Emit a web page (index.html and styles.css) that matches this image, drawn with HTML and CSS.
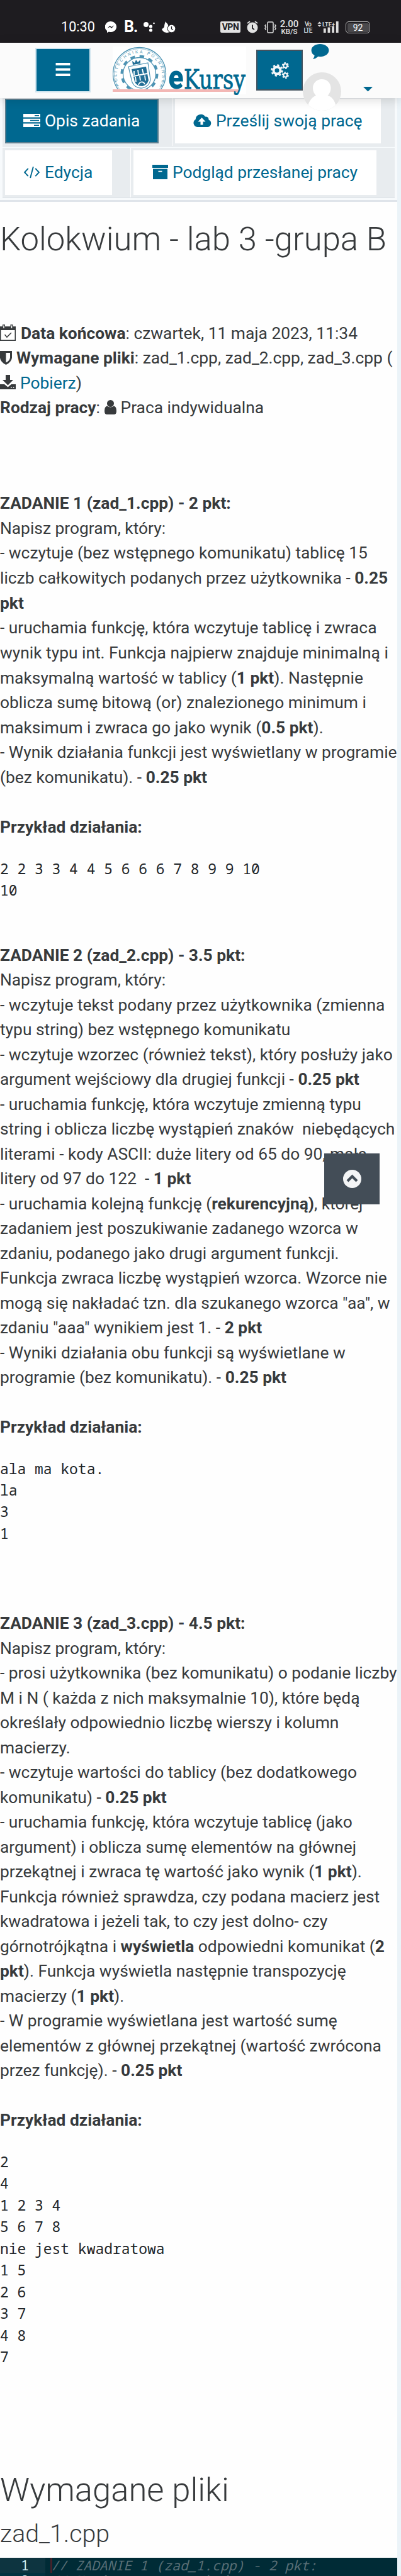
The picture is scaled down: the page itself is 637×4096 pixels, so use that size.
FILE: index.html
```html
<!DOCTYPE html>
<html lang="pl">
<head>
<meta charset="utf-8">
<title>Kolokwium - lab 3 - eKursy</title>
<link rel="stylesheet" href="styles.css">
</head>
<body>
<div class="status">
  <span class="clock">10:30</span>
  <svg class="st-msg" viewBox="0 0 18 18"><path fill="#fff" d="M9 0a9 8.5 0 0 0-6 15v3l3-1.500A9 8.500 0 1 0 9 0z"/><path d="M3.500 11l4-4.300 2.500 2.200 4.300-2.600-4 4.600-2.600-2.200z" fill="#1e1c20"/></svg>
  <span class="st-b">B.</span>
  <svg class="st-dots" viewBox="0 0 18 18" fill="#fff"><circle cx="4" cy="5" r="4"/><circle cx="11.500" cy="8" r="2.600"/><circle cx="11.500" cy="14" r="2.600"/><circle cx="16.500" cy="3" r="1.300"/></svg>
  <svg class="st-flame" viewBox="0 0 22 18"><path fill="#fff" d="M6 0c1 3 5 4 4 8l-1 4 3 5c-4 2-10 1-12-5 2-1 3-1 4-4C4 5 5 3 6 0z"/><circle cx="15.500" cy="11.500" r="6.300" fill="#fff" stroke="#1e1c20"/><path d="M15.500 8v4l2.500 1.500" fill="none" stroke="#1e1c20" stroke-width="1.300"/></svg>
  <span class="vpn">VPN</span>
  <svg class="st-alarm" viewBox="0 0 18 20"><circle cx="9" cy="11" r="8.500" fill="#e2e2e2"/><path d="M1 4l4-3M17 4l-4-3" stroke="#e2e2e2" stroke-width="1.800"/><path d="M9 6.500V12l3 2" fill="none" stroke="#1e1c20" stroke-width="1.800"/></svg>
  <svg class="st-vib" viewBox="0 0 19 19" fill="none" stroke="#e2e2e2" stroke-width="1.500"><rect x="5" y="1" width="9" height="17" rx="1.500"/><path d="M2.500 5l-1.500 2 1.500 2-1.500 2 1.500 3M16.500 5l1.500 2-1.500 2 1.500 2-1.500 3"/></svg>
  <span class="speed"><b>2.00</b><i>KB/S</i></span>
  <span class="volte"><b>Vo</b><b>LTE</b></span>
  <svg class="st-signal" viewBox="0 0 36 20"><path d="M0 5l3.300-3.500L6.500 5zM0 7h6.500L3.300 10z" fill="#ddd"/><text x="8" y="9" class="lte" textLength="21" lengthAdjust="spacingAndGlyphs">LTE+</text><path fill="#ddd" d="M10 13h4v7h-4zM17 11h4v9h-4zM24 9h4v11h-4zM31 1h4v19h-4z"/></svg>
  <span class="battery"><b>92</b></span>
</div>

<header class="top">
  <span class="btn-menu"><svg viewBox="0 0 24 22"><path fill="#fff" d="M0 0h24v4.200H0zM0 8.900h24v4.200H0zM0 17.800h24V22H0z"/></svg></span>
  <svg class="logo" viewBox="0 0 212 76">
    <defs><clipPath id="seal"><path d="M0 0h90v67.500H0z"/></clipPath><path id="ring" d="M10 62A36 36 0 1 1 75 62"/></defs>
    <path fill="#fff" d="M0 0h212v76H0z"/>
    <g clip-path="url(#seal)" fill="none" stroke="#4d93b3">
      <circle cx="42.500" cy="43.500" r="42" stroke-width="1.300"/>
      <circle cx="42.500" cy="43.500" r="40" stroke-width=".6"/>
      <circle cx="42.500" cy="43.500" r="28" stroke-width="4" stroke-dasharray="7.300 7.360"/>
      <circle cx="42.500" cy="43.500" r="26" stroke-width="1.300" fill="#fff"/>
      <path d="M25 32l31-6 4 27q-2 11-13 13-11 1-16-9z" stroke-width="1.200"/>
      <path d="M30 36l23-4 4 22q-3 8-10 9-9 0-12-7z" fill="#236f96" stroke="none"/>
      <path d="M34 39v6M40 37l1 8M47 36l2 8M36 48l1 8M43 47l1 7M51 46l1 8M33 47l22-4M41 61c2-6 8-6 10-1" stroke="#fff" stroke-width="1.800"/>
      <path d="M32 29l-1-6 4 3 2-5 3 4 4-4v6z" fill="#236f96" stroke="none"/>
    </g>
    <text class="ringtext"><textPath href="#ring" textLength="146">POLITECHNIKA POZNAŃSKA</textPath></text>
    <path fill="#f3b7b5" d="M0 68h199v4H0z"/>
    <text class="logo-e" x="88.500" y="66.500" textLength="24" lengthAdjust="spacingAndGlyphs">e</text>
    <text class="logo-k" x="113" y="66.500" textLength="98" lengthAdjust="spacingAndGlyphs">Kursy</text>
  </svg>
  <span class="btn-gear"><svg viewBox="0 0 29 26" fill="none" stroke="#f4f7f9"><circle cx="10" cy="13" r="5.500" stroke-width="4"/><circle cx="10" cy="13" r="8.500" stroke-width="2.500" stroke-dasharray="3.340 3.340"/><circle cx="23.300" cy="5.500" r="3" stroke-width="2.200"/><circle cx="23.300" cy="5.500" r="4.700" stroke-width="1.700" stroke-dasharray="2.460 2.460"/><circle cx="23.300" cy="20.500" r="3" stroke-width="2.200"/><circle cx="23.300" cy="20.500" r="4.700" stroke-width="1.700" stroke-dasharray="2.460 2.460"/></svg></span>
  <span class="user">
    <svg class="bubble" viewBox="0 0 29 25"><path fill="#006890" d="M14.500 0C22 0 29 4 29 10.500S22 21 14.500 21q-1.500 0-3-.3Q7.500 24.500 2.500 25q2.500-2.500 2.800-6Q0 16 0 10.500C0 4 7 0 14.500 0z"/></svg>
    <svg class="avatar" viewBox="0 0 61 61"><defs><clipPath id="av"><circle cx="30.500" cy="30.500" r="30.500"/></clipPath></defs><g clip-path="url(#av)"><path fill="#e4e4e4" d="M0 0h61v61H0z"/><path fill="#fff" d="M30.500 11c8 0 14 6 14 14 0 5-2 9-5 12 6 1 12 8 13 17v8H8v-8c2-9 7-15 13-17-3-3-5-7-5-12 0-8 6-14 14.500-14z"/></g></svg>
  </span>
  <span class="caret"></span>
</header>

<main class="page">
  <nav class="tabs">
    <div class="row">
      <div class="cell c1"><a class="tab active"><svg class="i-list" viewBox="0 0 27 27" preserveAspectRatio="none"><path fill="#fff" d="M0 0h27v7H0zM0 10h27v7H0zM0 20h27v7H0z"/><path stroke="#006890" stroke-width="1.800" d="M18 3.500h7M11 13.500h14M17 23.500h8"/></svg>Opis zadania</a></div>
      <div class="cell"><a class="tab t2"><svg class="i-cloud" viewBox="0 0 29 21"><path fill="#006890" d="M6.500 21A6.500 6.500 0 0 1 3.600 9 8.500 8.500 0 0 1 19 4.500a4.600 4.600 0 0 1 5.500 5A6 6 0 0 1 23 21z"/><path fill="#fff" d="M13.500 6l6 6.500h-4V17.500h-4v-5h-4z"/></svg>Prześlij swoją pracę</a></div>
    </div>
    <div class="row">
      <div class="cell c3"><a class="tab t3"><svg class="i-code" viewBox="0 0 27 21" fill="none" stroke="#006890" stroke-width="2"><path d="M7.500 4L1.500 10.500l6 6.500M19.500 4l6 6.500-6 6.500M16 1l-5 19"/></svg>Edycja</a></div>
      <div class="cell"><a class="tab t4"><svg class="i-box" viewBox="0 0 25 23"><path fill="#006890" d="M0 0h25v5H0zM1 6.500h23V23H1z"/><path stroke="#fff" stroke-width="1.600" d="M9.500 10.500h6"/></svg>Podgląd przesłanej pracy</a></div>
    </div>
  </nav>

  <h1 class="title">Kolokwium - lab 3 -grupa B</h1>

  <p class="meta"><svg class="i-cal" viewBox="0 0 25 26"><path fill="#373a3c" fill-rule="evenodd" d="M0 3h25v23H0zM1.500 9v15.500h22V9z"/><path stroke="#373a3c" stroke-width="4" d="M6 0v7M18.500 0v7"/><path stroke="#fff" stroke-width="1.500" d="M6 1.500v4.500M18.500 1.500v4.500"/><path d="M7.500 16l3.500 4 7-7" fill="none" stroke="#373a3c" stroke-width="1.600"/></svg><b>Data końcowa</b>: czwartek, 11 maja 2023, 11:34<br>
  <svg class="i-shield" viewBox="0 0 19 22"><path fill="#373a3c" fill-rule="evenodd" d="M0 0h19v11q-1 7-9.500 11Q1 18 0 11zM9.500 3v15.500q6-3 6.500-8V3z"/></svg><b>Wymagane pliki</b>: zad_1.cpp, zad_2.cpp, zad_3.cpp (<br>
  <svg class="i-down" viewBox="0 0 25 23"><path fill="#373a3c" d="M9 0h7v8h5l-8.500 8.500L4 8h5zM0 15h7l5.500 4.500L18 15h7v8H0z"/><path stroke="#fff" stroke-width="1.500" d="M17 20h1.700M20.700 20h1.700"/></svg><a class="link">Pobierz</a>)<br>
  <b>Rodzaj pracy</b>: <svg class="i-user" viewBox="0 0 19 23"><circle cx="9.500" cy="5.500" r="5.500" fill="#373a3c"/><path fill="#373a3c" d="M4 9.500q5.500 4 11 0 4 1 4 8 0 5.500-4 5.500H4q-4 0-4-5.500 0-7 4-8z"/></svg>Praca indywidualna</p>

  <section class="task t-one">
    <p class="text"><b>ZADANIE 1 (zad_1.cpp) - 2 pkt:</b><br>
Napisz program, który:<br>
- wczytuje (bez wstępnego komunikatu) tablicę 15<br>
liczb całkowitych podanych przez użytkownika - <b>0.25<br>
pkt</b><br>
- uruchamia funkcję, która wczytuje tablicę i zwraca<br>
wynik typu int. Funkcja najpierw znajduje minimalną i<br>
maksymalną wartość w tablicy (<b>1 pkt</b>). Następnie<br>
oblicza sumę bitową (or) znalezionego minimum i<br>
maksimum i zwraca go jako wynik (<b>0.5 pkt</b>).<br>
- Wynik działania funkcji jest wyświetlany w programie<br>
(bez komunikatu). - <b>0.25 pkt</b><br>
<br>
<b>Przykład działania:</b></p>
    <pre class="sample">2 2 3 3 4 4 5 6 6 6 7 8 9 9 10
10</pre>
  </section>

  <section class="task t-two">
    <p class="text"><b>ZADANIE 2 (zad_2.cpp) - 3.5 pkt:</b><br>
Napisz program, który:<br>
- wczytuje tekst podany przez użytkownika (zmienna<br>
typu string) bez wstępnego komunikatu<br>
- wczytuje wzorzec (również tekst), który posłuży jako<br>
argument wejściowy dla drugiej funkcji - <b>0.25 pkt</b><br>
- uruchamia funkcję, która wczytuje zmienną typu<br>
string i oblicza liczbę wystąpień znaków&nbsp; niebędących<br>
literami - kody ASCII: duże litery od 65 do 90, małe<br>
litery od 97 do 122&nbsp; - <b>1 pkt</b><br>
- uruchamia kolejną funkcję (<b>rekurencyjną)</b>, której<br>
zadaniem jest poszukiwanie zadanego wzorca w<br>
zdaniu, podanego jako drugi argument funkcji.<br>
Funkcja zwraca liczbę wystąpień wzorca. Wzorce nie<br>
mogą się nakładać tzn. dla szukanego wzorca "aa", w<br>
zdaniu "aaa" wynikiem jest 1. - <b>2 pkt</b><br>
- Wyniki działania obu funkcji są wyświetlane w<br>
programie (bez komunikatu). - <b>0.25 pkt</b><br>
<br>
<b>Przykład działania:</b></p>
    <pre class="sample">ala ma kota.
la
3
1</pre>
    <span class="to-top"><svg viewBox="0 0 29 29"><circle cx="14.500" cy="14.500" r="14.500" fill="#f4f5f6"/><path d="M7 18l7.500-7.500L22 18" fill="none" stroke="#434d57" stroke-width="4.200"/></svg></span>
  </section>

  <section class="task t-three">
    <p class="text"><b>ZADANIE 3 (zad_3.cpp) - 4.5 pkt:</b><br>
Napisz program, który:<br>
- prosi użytkownika (bez komunikatu) o podanie liczby<br>
M i N ( każda z nich maksymalnie 10), które będą<br>
określały odpowiednio liczbę wierszy i kolumn<br>
macierzy.<br>
- wczytuje wartości do tablicy (bez dodatkowego<br>
komunikatu) - <b>0.25 pkt</b><br>
- uruchamia funkcję, która wczytuje tablicę (jako<br>
argument) i oblicza sumę elementów na głównej<br>
przekątnej i zwraca tę wartość jako wynik (<b>1 pkt</b>).<br>
Funkcja również sprawdza, czy podana macierz jest<br>
kwadratowa i jeżeli tak, to czy jest dolno- czy<br>
górnotrójkątna i <b>wyświetla</b> odpowiedni komunikat (<b>2<br>
pkt</b>). Funkcja wyświetla następnie transpozycję<br>
macierzy (<b>1 pkt</b>).<br>
- W programie wyświetlana jest wartość sumę<br>
elementów z głównej przekątnej (wartość zwrócona<br>
przez funkcję). - <b>0.25 pkt</b><br>
<br>
<b>Przykład działania:</b></p>
    <pre class="sample">2
4
1 2 3 4
5 6 7 8
nie jest kwadratowa
1 5
2 6
3 7
4 8
7</pre>
  </section>

  <h2 class="files">Wymagane pliki</h2>
  <h3 class="file">zad_1.cpp</h3>
  <div class="code">
    <div class="line current"><span class="num">1</span><span class="src">// ZADANIE 1 (zad_1.cpp) - 2 pkt:</span></div>
    <div class="line"><span class="num">2</span><span class="src">// Napisz program, który:</span></div>
  </div>
</main>
</body>
</html>
```
FILE: styles.css
```css
* { box-sizing: border-box; margin: 0; padding: 0; }
body { width: 637px; height: 4096px; overflow: hidden; background: #fff; font-family: Roboto, sans-serif; font-size: 26.350px; color: #373a3c; }
svg { flex: none; }

/* phone status bar */
.status { display: flex; align-items: flex-start; height: 68px; padding: 34px 0 0 97px; background: #1e1c20; color: #fff; }
.clock { width: 70px; font-size: 21.600px; line-height: 18px; }
.st-msg { width: 18px; height: 18px; }
.st-b { width: 31px; margin-left: 12px; font-size: 25px; font-weight: 700; line-height: 18px; white-space: nowrap; letter-spacing: -1px; }
.st-dots { width: 18px; height: 18px; }
.st-flame { width: 22px; height: 18px; margin-left: 11px; }
.vpn { width: 32px; height: 18px; margin-left: 71px; border-radius: 2px; background: #e2e2e2; color: #1e1c20; font-size: 14px; font-weight: 700; line-height: 18px; text-align: center; letter-spacing: -.5px; }
.st-alarm { width: 18px; height: 20px; margin: -1px 0 0 9.500px; }
.st-vib { width: 19px; height: 19px; margin-left: 10.500px; }
.speed { display: flex; flex-direction: column; align-items: center; width: 31px; margin: -2px 0 0 5px; color: #e2e2e2; }
.speed b { font-size: 15px; font-weight: 500; line-height: 13px; }
.speed i { font-style: normal; font-size: 11.500px; font-weight: 500; line-height: 11px; }
.volte { display: flex; flex-direction: column; align-items: center; width: 14px; margin-left: 7px; color: #ddd; }
.volte b { font-size: 10px; font-weight: 500; line-height: 9.500px; letter-spacing: -1px; }
.st-signal { width: 35px; height: 19px; margin: -1px 0 0 8px; }
.lte { font: 700 10px Roboto, sans-serif; fill: #ddd; }
.battery { width: 39px; height: 19px; margin-left: 10px; border: 1.500px solid #bdbdbd; border-radius: 5px; padding: 1.500px; }
.battery b { display: block; background: #4a494c; border-radius: 2px; font-size: 14px; font-weight: 400; line-height: 14px; text-align: center; }

/* sticky page header */
.top { position: relative; z-index: 2; display: flex; align-items: flex-start; height: 88px; padding-left: 56px; background: #fbfbfb; box-shadow: 0 2px 16px rgba(0, 0, 0, .16); }
.btn-menu { display: flex; align-items: center; justify-content: center; width: 88px; height: 71px; margin-top: 8px; background: #006890; border: 2px solid #cfe4ee; }
.btn-menu svg { width: 24px; height: 21px; margin-bottom: 2px; }
.logo { width: 212px; height: 76px; margin: 6px 0 0 35px; overflow: visible; }
.ringtext { font: 6.500px "Liberation Sans", sans-serif; fill: #4d93b3; }
.logo-e { font: 900 53px Roboto, sans-serif; fill: #006890; }
.logo-k { font: 42px "DejaVu Serif", serif; fill: #006890; stroke: #006890; stroke-width: .8px; }
.btn-gear { display: flex; align-items: center; justify-content: center; width: 74px; height: 65px; margin: 11px 0 0 16px; background: #006890; border: 2px solid #44525e; }
.btn-gear svg { width: 29px; height: 26px; }
.user { display: flex; flex-direction: column; width: 61px; padding-top: 2px; }
.bubble { width: 29px; height: 24px; margin-left: 13px; }
.avatar { width: 61px; height: 61px; margin-top: 21px; }
.caret { width: 15px; height: 7.500px; margin: 70px 0 0 35px; background: #006890; clip-path: polygon(0 0, 100% 0, 50% 100%); }

/* page */
.page { width: 637px; height: 3940px; border-right: 6px solid #ebf3f8; background: #fefefe; }
.tabs { height: 165px; padding: 0 4px; background: #f7fafc; border-bottom: 3px solid #dfe4ea; }
.row { display: flex; height: 77px; margin-bottom: 2px; background: #e8ecef; border-bottom: 1px solid #dde2e7; }
.row + .row { height: 80px; }
.cell { padding: 1px 0 0 4px; }
.row + .row .cell { padding-top: 4px; }
.c1 { width: 270px; border-right: 1px solid #fff; }
.c3 { width: 204px; border-right: 1px solid #fff; }
.tab { display: flex; align-items: center; height: 71px; padding: 0 0 2px 29px; background: #fff; color: #006890; white-space: nowrap; }
.active { width: 244px; background: #006890; color: #fff; border: 2px solid #5c7f90; padding-left: 27px; }
.t2 { width: 327px; }
.t3 { width: 170px; }
.t4 { width: 386px; padding-left: 30px; }
.i-list { width: 27px; height: 21px; margin-right: 7px; }
.i-cloud { width: 29px; height: 21px; margin-right: 7px; }
.i-code { width: 27px; height: 20px; margin-right: 7px; }
.i-box { width: 25px; height: 23px; margin-right: 7px; }

.title { margin-top: 28px; font-size: 52.600px; font-weight: 300; line-height: 63px; white-space: nowrap; }
.meta { margin-top: 99px; line-height: 39.430px; white-space: nowrap; }
.meta svg { margin-right: 7px; }
.meta .i-cal { width: 25px; height: 26px; vertical-align: -3px; margin-right: 8px; }
.i-shield { width: 19px; height: 22px; vertical-align: -2px; }
.i-down { width: 25px; height: 23px; vertical-align: -1px; }
.i-user { width: 19px; height: 23px; vertical-align: -2px; }
.link { color: #006890; }

.task { position: relative; white-space: nowrap; }
.t-one { margin-top: 112.300px; }
.t-two { margin-top: 67.400px; }
.t-three { margin-top: 107.500px; }
.text { line-height: 39.480px; }
.t-one .text { line-height: 39.640px; }
.sample { margin-top: 28px; font: 22.940px/34.300px "Noto Sans Mono", "DejaVu Sans Mono", monospace; color: #212529; }
.t-three .sample { line-height: 34.520px; }
.to-top { position: absolute; left: 515px; top: 334px; display: flex; align-items: center; justify-content: center; width: 88px; height: 81px; background: #434d57; }
.to-top svg { width: 29px; height: 29px; }

.files { margin-top: 163px; font-size: 52.600px; font-weight: 300; line-height: 63px; }
.file { margin-top: 15px; font-size: 39.300px; font-weight: 300; line-height: 47px; }
.code { height: 32px; margin-top: 14px; overflow: hidden; background: #002b36; font: 21.350px/24px "Noto Sans Mono", "DejaVu Sans Mono", monospace; color: #586e75; }
.line { display: flex; height: 24px; }
.num { width: 72px; padding-right: 26px; background: #01313f; color: #d0edf7; text-align: right; }
.current .num { background: #0d3440; }
.src { margin-left: 8px; border-left: 3px solid transparent; font-style: italic; white-space: pre; text-indent: -2px; }
.current .src { border-left-color: #45222b; }
```
